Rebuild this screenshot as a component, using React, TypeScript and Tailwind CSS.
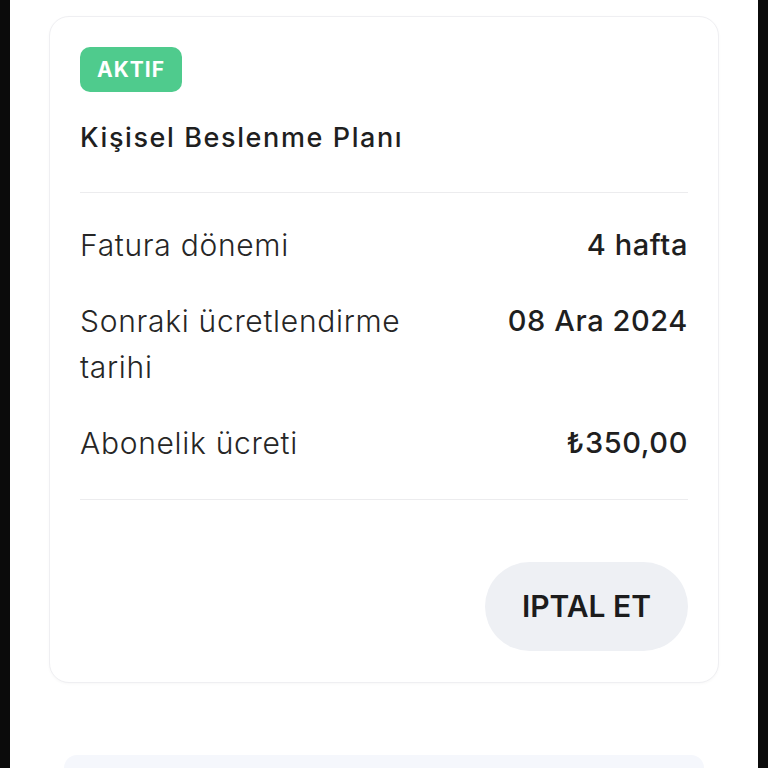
export default function App() {
  const rows = [
    { label: "Fatura dönemi", value: "4 hafta" },
    { label: "Sonraki ücretlendirme tarihi", value: "08 Ara 2024" },
    { label: "Abonelik ücreti", value: "₺350,00" },
  ]

  return (
    <div className="flex h-[768px] overflow-hidden bg-white font-['Inter',sans-serif] text-[#1f1f1f]">
      <div className="w-[10px] shrink-0 bg-[#0b0b0b]" />

      <div className="flex flex-1 flex-col px-[39px] pt-4">
        <div className="rounded-[20px] border border-[#efeff2] bg-white pl-[30px] pr-[30px] pt-[30px] pb-[31px] shadow-[0_1px_3px_rgba(0,0,0,0.03)]">
          <span className="inline-flex h-[45px] items-center rounded-[10px] bg-[#4fcb8d] px-[17px] text-[21px] font-bold tracking-[1px] text-white">
            AKTIF
          </span>

          <div className="mt-[30px] text-[27px] font-medium leading-[32px] tracking-[1.6px]">Kişisel Beslenme Planı</div>

          <div className="mt-[38px] h-px bg-[#ececee]" />

          <div className="mt-[29px] flex flex-col gap-[30px]">
            {rows.map((r) => (
              <div key={r.label} className="flex items-start justify-between">
                <div className="max-w-[350px] text-[30px] font-light leading-[46px] tracking-[0.7px] text-[#262626]">
                  {r.label}
                </div>
                <div className="text-[29px] font-medium leading-[46px] tracking-[0.6px] text-[#1f1f1f]">{r.value}</div>
              </div>
            ))}
          </div>

          <div className="mt-[33px] h-px bg-[#ececee]" />

          <div className="mt-[62px] flex justify-end">
            <button className="h-[89px] w-[203px] rounded-full bg-[#eef0f4] text-[30px] font-semibold text-[#1c1c1c]">
              IPTAL ET
            </button>
          </div>
        </div>

        <div className="mx-[15px] mt-[72px] h-[40px] rounded-t-[14px] bg-[#f5f7fc]" />
      </div>

      <div className="w-[10px] shrink-0 bg-[#0b0b0b]" />
    </div>
  )
}
